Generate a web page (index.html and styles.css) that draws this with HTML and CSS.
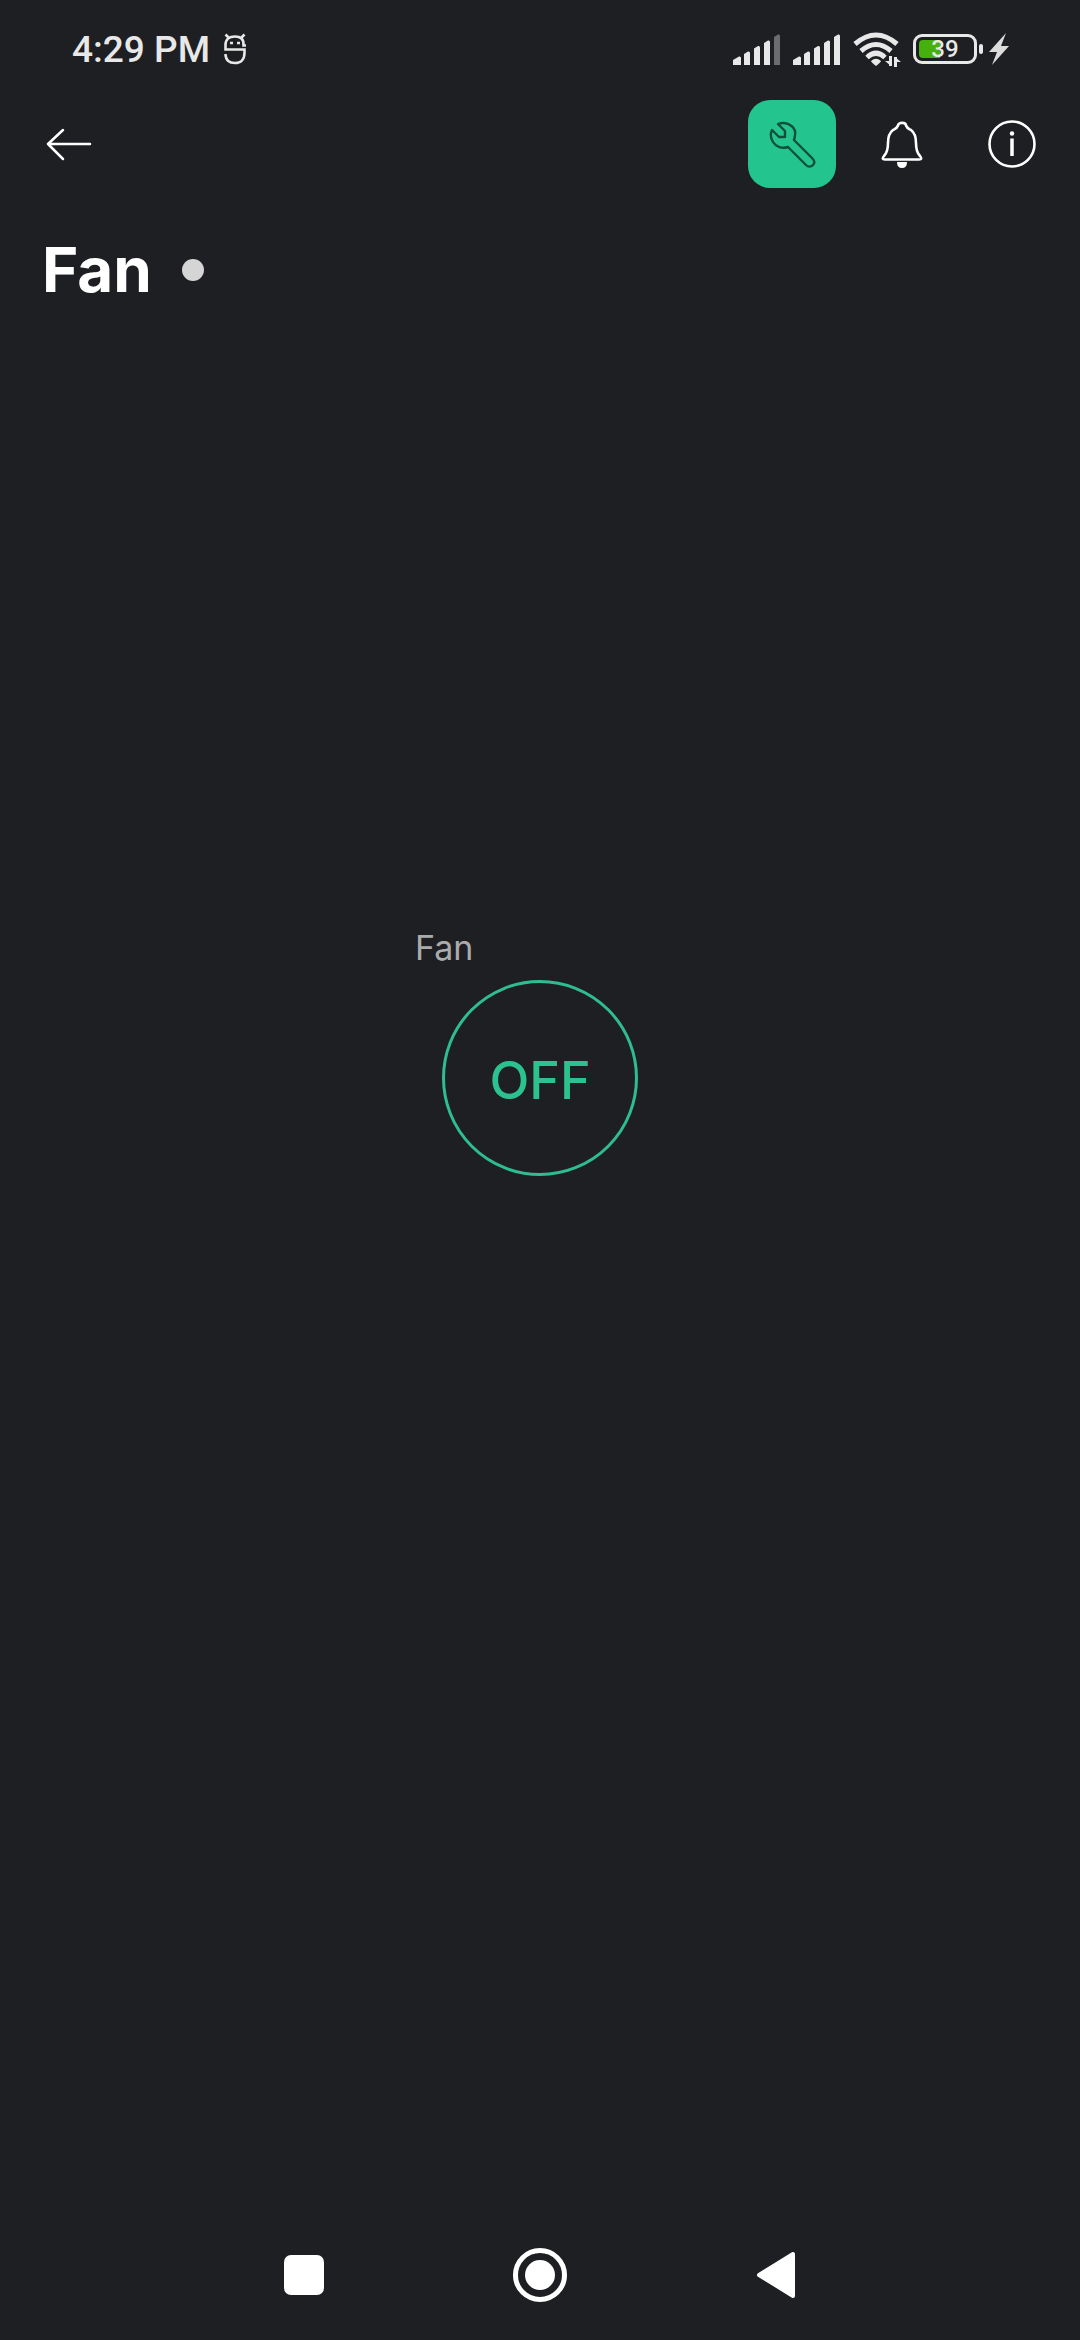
FILE: index.html
```
<!DOCTYPE html>
<html lang="en">
<head>
    <meta charset="UTF-8">
    <meta name="viewport" content="width=device-width, initial-scale=1.0">
    <title>Fan</title>
    <link rel="stylesheet" href="styles.css">
</head>
<body>
    <div class="status-bar">
        <div class="status-left">
            <span class="clock">4:29 PM</span>
            <svg width="22" height="32" viewBox="0 0 22 32" fill="none" stroke="#e8e8e8" stroke-width="2.6">
                <path d="M1.500 1.500 5 5M20.500 1.500 17 5"/>
                <path d="M22 12.500H19.500C20 6 16.500 3.500 11 3.500S1.500 6 1.500 12V16.500H20.500V20C20.500 26 17 30 11 30S1.500 27 1.500 21"/>
                <path d="M6 10h3M13 10h3"/>
            </svg>
        </div>
        <div class="status-right">
            <svg width="48" height="32" viewBox="0 0 48 32" fill="#e8e8e8">
                <path d="M0 32V27L6 23.500Q8 23 8 25V32ZM11 32V21L15 18.500Q17 18 17 20V32ZM21 32V15.500L25 13Q27 12.500 27 14.500V32ZM31 32V10L35 7.500Q37 7 37 9V32Z"/>
                <path fill="#6b6c6e" d="M41 32V4L45 1.500Q47 1 47 3V32Z"/>
            </svg>
            <svg width="48" height="32" viewBox="0 0 48 32" fill="#e8e8e8">
                <path d="M0 32V27L6 23.500Q8 23 8 25V32ZM11 32V21L15 18.500Q17 18 17 20V32ZM21 32V15.500L25 13Q27 12.500 27 14.500V32ZM31 32V10L35 7.500Q37 7 37 9V32ZM41 32V4L45 1.500Q47 1 47 3V32Z"/>
            </svg>
            <svg width="48" height="36" viewBox="0 0 48 36" fill="none" stroke="#e8e8e8" stroke-width="5">
                <path d="M2 13Q23-5 44 13M8 20Q23 7 38 20M14 26.500Q23 18 32 26.500"/>
                <path fill="#e8e8e8" stroke="none" d="M18 30Q23 25.500 28 30Q28 31 23 35Q18 31 18 30Z"/>
                <path stroke-width="3" d="M37.500 25V35M42.500 36V26"/>
                <path fill="#e8e8e8" stroke="none" d="M32 30H38V35ZM48 31H42V26Z"/>
            </svg>
            <div class="battery">
                <div class="battery-body"><span class="battery-level"></span><span class="battery-text">39</span></div>
                <span class="battery-cap"></span>
                <svg class="bolt" width="20" height="32" viewBox="0 0 20 32" fill="#dcdcdc"><path d="M17 0 0 19H8L3 32 20 13H12Z"/></svg>
            </div>
        </div>
    </div>

    <header class="toolbar">
        <button class="icon-button" aria-label="Back">
            <svg width="48" height="36" viewBox="0 0 48 36" fill="none" stroke="#fff" stroke-width="2.500" stroke-linecap="round" stroke-linejoin="round"><path d="M46 18H4M19 4 4 18 19 33"/></svg>
        </button>
        <div class="actions">
            <button class="icon-button active" aria-label="Settings">
                <svg width="48" height="48" viewBox="0 0 48 48" fill="none" stroke="#124f3c" stroke-width="2.400" stroke-linejoin="round" stroke-linecap="round">
                    <path d="M10 4C17 1 25 5 27 11C27.500 14 27 17 26 20L44 38C47 41 47 43 45 45C43 47 40 47 38 45L20 27C14 29 8 27 5 22C2 17 2 14 4 10L11 17H17V11Z"/>
                </svg>
            </button>
            <button class="icon-button" aria-label="Notifications">
                <svg width="44" height="48" viewBox="0 0 44 48" fill="none" stroke="#fff" stroke-width="2.600" stroke-linejoin="round">
                    <path d="M18 5.500C18 2 26 2 26 5.500C27 8.500 29 9 31 10C35 13 36 17 36 23C36 30 37 33 40 36Q43 39.500 39 39.500H5Q1 39.500 4 36C7 33 8 30 8 23C8 17 9 13 13 10C15 9 17 8.500 18 5.500Z"/>
                    <path fill="#fff" stroke="none" d="M17 42H27Q27 48 22 48T17 42Z"/>
                </svg>
            </button>
            <button class="icon-button" aria-label="Information">
                <svg width="48" height="48" viewBox="0 0 48 48" fill="none" stroke="#fff" stroke-width="2.600">
                    <circle cx="24" cy="24" r="22.500"/>
                    <path stroke-width="3.500" d="M24 18.500V36"/>
                    <circle cx="24" cy="13.500" r="2.200" fill="#fff" stroke="none"/>
                </svg>
            </button>
        </div>
    </header>

    <div class="title-row">
        <h1>Fan</h1>
        <span class="status-dot"></span>
    </div>

    <main>
        <div class="widget">
            <label for="fan-switch">Fan</label>
            <button class="switch" id="fan-switch">OFF</button>
        </div>
    </main>

    <nav class="nav-bar">
        <button aria-label="Recent apps">
            <svg width="56" height="56" viewBox="0 0 56 56" fill="#fff"><rect x="8" y="8" width="40" height="40" rx="7"/></svg>
        </button>
        <button aria-label="Home">
            <svg width="56" height="56" viewBox="0 0 56 56" fill="#fff"><circle cx="28" cy="28" r="24.500" fill="none" stroke="#fff" stroke-width="5"/><circle cx="28" cy="28" r="15"/></svg>
        </button>
        <button aria-label="Back">
            <svg width="56" height="56" viewBox="0 0 56 56" fill="#fff" stroke="#fff" stroke-width="4" stroke-linejoin="round"><path d="M45 7V49L11 28Z"/></svg>
        </button>
    </nav>
</body>
</html>
```
FILE: styles.css
```
* {
    box-sizing: border-box;
}
body {
    margin: 0;
    min-height: 100vh;
    display: flex;
    flex-direction: column;
    background: #1e1f22;
    color: #fff;
    font-family: Inter, "Liberation Sans", sans-serif;
}
button {
    padding: 0;
    border: none;
    background: none;
    color: inherit;
    cursor: pointer;
}
svg {
    display: block;
}
.status-bar {
    display: flex;
    justify-content: space-between;
    align-items: center;
    height: 96px;
    padding: 2px 71px 0 72px;
    color: #e8e8e8;
    font-family: Roboto, sans-serif;
}
.status-left {
    display: flex;
    align-items: center;
    gap: 14px;
}
.status-right {
    display: flex;
    align-items: center;
    gap: 12px;
}
.clock {
    font-size: 37px;
    font-weight: 500;
}
.battery {
    display: flex;
    align-items: center;
    gap: 2px;
}
.battery-body {
    position: relative;
    width: 64px;
    height: 30px;
    border: 3px solid #e8e8e8;
    border-radius: 9px;
    font-size: 24px;
    font-weight: 500;
    line-height: 24px;
    text-align: center;
}
.battery-level {
    position: absolute;
    left: 3px;
    top: 3px;
    width: 21px;
    height: 18px;
    border-radius: 4px 0 0 4px;
    background: #46b10c;
}
.battery-text {
    position: relative;
}
.battery-cap {
    width: 4px;
    height: 10px;
    border-radius: 2px;
    background: #e8e8e8;
}
.bolt {
    margin-left: 4px;
}
.toolbar {
    display: flex;
    justify-content: space-between;
    align-items: center;
    height: 96px;
    padding: 0 24px;
}
.actions {
    display: flex;
    gap: 22px;
}
.icon-button {
    display: flex;
    justify-content: center;
    align-items: center;
    width: 88px;
    height: 88px;
    border-radius: 22px;
}
.active {
    background: #24c48e;
}
.title-row {
    display: flex;
    align-items: center;
    gap: 30px;
    padding: 40px 42px;
}
h1 {
    margin: 0;
    font-size: 62px;
    line-height: 76px;
}
.status-dot {
    width: 22px;
    height: 22px;
    border-radius: 50%;
    background: #d5d5d5;
}
main {
    flex: 1;
    display: flex;
    justify-content: center;
    align-items: flex-start;
    padding-top: 580px;
}
.widget {
    display: flex;
    flex-direction: column;
    gap: 12px;
    width: 250px;
}
.widget label {
    color: #aaabad;
    font-size: 34px;
    line-height: 40px;
}
.switch {
    align-self: center;
    width: 196px;
    height: 196px;
    padding-top: 4px;
    border: 3px solid #2fbd90;
    border-radius: 50%;
    color: #2bc28f;
    font-family: inherit;
    font-size: 52px;
    font-weight: 500;
}
.nav-bar {
    display: flex;
    justify-content: center;
    gap: 180px;
    padding: 37px 0;
}
```
